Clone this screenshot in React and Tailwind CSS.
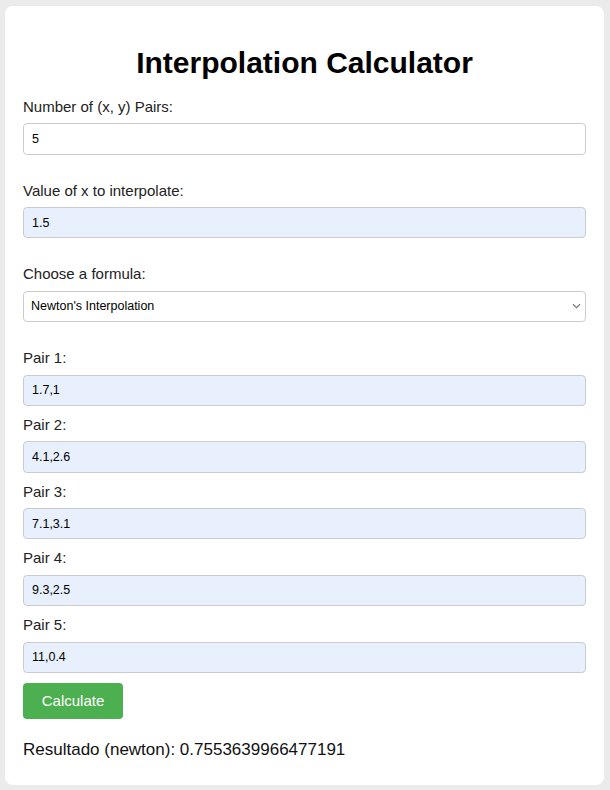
import { useState } from "react";

const initialPairs = ["1.7,1", "4.1,2.6", "7.1,3.1", "9.3,2.5", "11,0.4"];

export default function App() {
  const [count, setCount] = useState("5");
  const [xValue, setXValue] = useState("1.5");
  const [formula, setFormula] = useState("newton");
  const [pairs, setPairs] = useState(initialPairs);

  const updatePair = (i, value) => {
    const next = [...pairs];
    next[i] = value;
    setPairs(next);
  };

  return (
    <div className="min-h-[790px] bg-[#ebebeb] pt-[6px] pl-[5px] font-['Liberation_Sans',Arial,sans-serif]">
      <div className="w-[599px] h-[779px] bg-white rounded-[8px] px-[18px] pt-[18px]">
        <h1 className="mt-[20px] mb-[17px] text-[30px] leading-[37px] font-bold text-center text-black">
          Interpolation Calculator
        </h1>

        {/* Settings */}
        <label className="block text-[15px] leading-[18.4px] mb-[7px] text-[#222]">Number of (x, y) Pairs:</label>
        <input
          type="number"
          value={count}
          onChange={(e) => setCount(e.target.value)}
          className="block w-full h-[31.33px] px-[8px] border border-[#ccc] rounded-[4px] bg-white text-[12.5px] text-black mb-[27px] outline-none"
        />

        <label className="block text-[15px] leading-[18.4px] mb-[7px] text-[#222]">Value of x to interpolate:</label>
        <input
          type="text"
          value={xValue}
          onChange={(e) => setXValue(e.target.value)}
          className="block w-full h-[31.33px] px-[8px] border border-[#ccc] rounded-[4px] bg-[#e8f0fe] text-[12.5px] text-black mb-[27px] outline-none"
        />

        <label className="block text-[15px] leading-[18.4px] mb-[7px] text-[#222]">Choose a formula:</label>
        <div className="relative mb-[27px]">
          <select
            value={formula}
            onChange={(e) => setFormula(e.target.value)}
            className="block w-full h-[31.33px] pl-[7px] pr-[24px] border border-[#ccc] rounded-[4px] bg-white text-[12.5px] text-black appearance-none outline-none"
          >
            <option value="newton">Newton's Interpolation</option>
            <option value="lagrange">Lagrange Interpolation</option>
          </select>
          <svg
            className="absolute right-[5px] top-[12px] pointer-events-none"
            width="9"
            height="6"
            viewBox="0 0 9 6"
            fill="none"
          >
            <path d="M1 1.2 L4.5 4.6 L8 1.2" stroke="#7a7a7a" strokeWidth="1.3" />
          </svg>
        </div>

        {/* Pairs */}
        {pairs.map((p, i) => (
          <div key={i}>
            <label className="block text-[15px] leading-[18.4px] mb-[7px] text-[#222]">Pair {i + 1}:</label>
            <input
              type="text"
              value={p}
              onChange={(e) => updatePair(i, e.target.value)}
              className="block w-full h-[31.33px] px-[8px] border border-[#ccc] rounded-[4px] bg-[#e8f0fe] text-[12.5px] text-black mb-[10px] outline-none"
            />
          </div>
        ))}

        <button className="block h-[36px] w-[100px] bg-[#4caf50] text-white text-[15px] rounded-[4px]">
          Calculate
        </button>

        <p className="mt-[21px] text-[17px] leading-[20px] text-[#111]">
          Resultado (newton): 0.7553639966477191
        </p>
      </div>
    </div>
  );
}
